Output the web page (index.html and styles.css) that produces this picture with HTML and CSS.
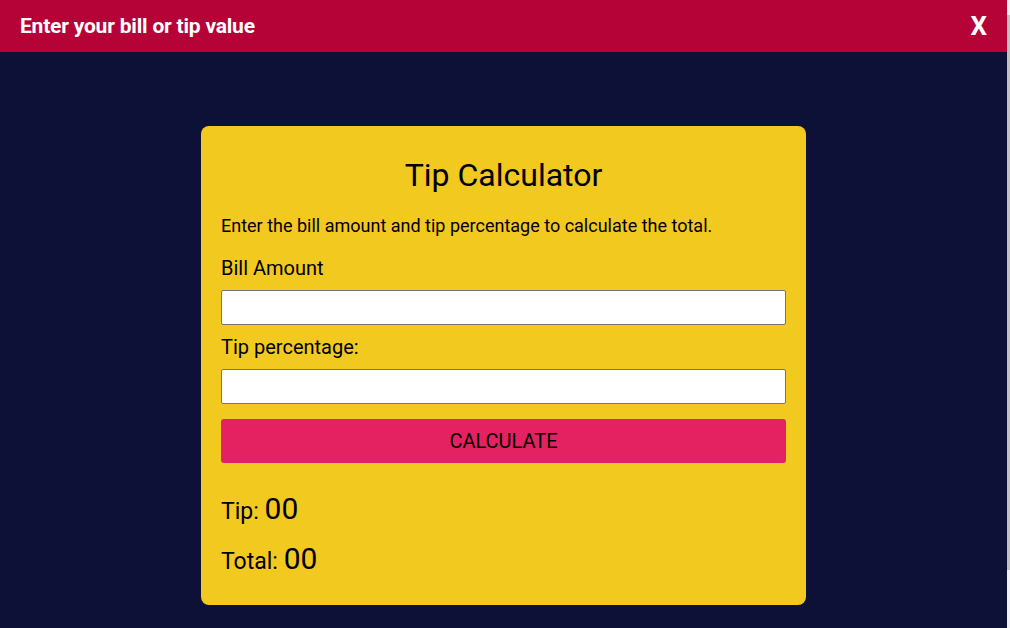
FILE: index.html
```html
<!DOCTYPE html>
<html lang="en">
<head>
<meta charset="utf-8">
<title>Tip Calculator</title>
<link rel="stylesheet" href="styles.css">
</head>
<body>
<div class="page">
  <div class="main">
    <header class="topbar">
      <span class="topbar-title">Enter your bill or tip value</span>
      <span class="topbar-close">X</span>
    </header>
    <div class="stage">
      <div class="card">
        <h1 class="card-title">Tip Calculator</h1>
        <p class="card-desc">Enter the bill amount and tip percentage to calculate the total.</p>
        <label class="field-label" for="bill">Bill Amount</label>
        <input class="field-input" id="bill" type="text">
        <label class="field-label" for="tip">Tip percentage:</label>
        <input class="field-input field-input-last" id="tip" type="text">
        <button class="calc-btn" type="button">CALCULATE</button>
        <p class="result result-first">Tip: <span class="result-value">00</span></p>
        <p class="result">Total: <span class="result-value">00</span></p>
      </div>
    </div>
  </div>
  <div class="scrollbar"><div class="scrollbar-thumb"></div></div>
</div>
</body>
</html>
```
FILE: styles.css
```css
* { box-sizing: border-box; }
html, body { margin: 0; padding: 0; height: 100%; }
body {
  font-family: Roboto, "Liberation Sans", Arial, sans-serif;
  background: #0d1137;
  color: #000;
  overflow: hidden;
}
.page {
  display: flex;
  height: 628px;
}
.main {
  flex: 1;
  display: flex;
  flex-direction: column;
  background: #0d1137;
}
.topbar {
  height: 52px;
  background: #b50338;
  display: flex;
  align-items: center;
  justify-content: space-between;
  padding: 0 20px 0 20px;
  color: #fff;
  font-weight: 700;
}
.topbar-title {
  font-size: 21px;
  letter-spacing: -0.2px;
}
.topbar-close {
  font-size: 26px;
}
.stage {
  flex: 1;
  display: flex;
  justify-content: center;
  align-items: flex-start;
  padding-top: 74px;
}
.card {
  display: block;
  width: 605px;
  background: #f2c91f;
  border-radius: 8px;
  padding: 10px 20px 11px;
}
.card-title {
  font-size: 32px;
  font-weight: 400;
  text-align: center;
  margin: 21px 0 20px;
  line-height: 37.5px;
}
.card-desc {
  font-size: 18px;
  margin: 0 0 21px;
  line-height: 21px;
}
.field-label {
  display: block;
  font-size: 20px;
  line-height: 23px;
  margin: 0 0 10px;
}
.field-input {
  display: block;
  height: 35px;
  width: 100%;
  border: 1px solid #767676;
  border-radius: 2px;
  background: #fff;
  margin: 0 0 11px;
  font-size: 16px;
  padding: 0 6px;
}
.field-input-last { margin-bottom: 15px; }
.calc-btn {
  display: block;
  height: 44px;
  width: 100%;
  border: none;
  border-radius: 3px;
  background: #e42262;
  color: #000;
  font-family: Roboto, "Liberation Sans", Arial, sans-serif;
  font-size: 20px;
  font-weight: 400;
  padding: 0;
}
.result {
  margin: 0 0 20px;
  font-size: 23px;
  line-height: 23px;
}
.result-first { margin-top: 31px; }
.result-value {
  font-size: 30px;
  line-height: 30px;
}
.scrollbar {
  width: 3px;
  background: #f1f1f1;
  display: flex;
  flex-direction: column;
  padding: 15px 0 58px;
}
.scrollbar-thumb {
  flex: 1;
  background: #c1c1c1;
}
```
